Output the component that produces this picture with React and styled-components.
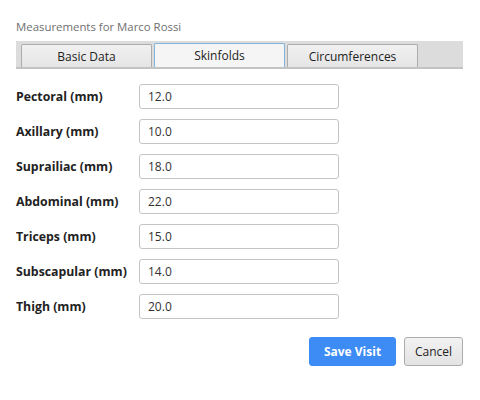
import React from 'react'
import styled, { createGlobalStyle } from 'styled-components'

const GlobalStyle = createGlobalStyle`
    body {
        margin: 0;
        background: #ffffff;
        font-family: "Open Sans", "Noto Sans", sans-serif;
    }
`

const Page = styled.div`
    width: 480px;
    height: 400px;
    box-sizing: border-box;
    padding: 19px 17px 0 16px;
    display: flex;
    flex-direction: column;
`

const Title = styled.div`
    font-size: 11.4px;
    color: #6f6f6f;
    height: 20px;
    line-height: 16px;
    margin-bottom: 2px;
`

const TabBar = styled.div`
    display: flex;
    align-items: flex-end;
    gap: 2px;
    height: 28px;
    box-sizing: border-box;
    padding: 0 0 0 5px;
    background: #dcdcdc;
    border-bottom: 2px solid #c3c3c3;
    margin-bottom: 15px;
`

const Tab = styled.div`
    width: 131px;
    height: ${p => (p.active ? '24px' : '23px')};
    box-sizing: border-box;
    display: flex;
    align-items: center;
    justify-content: center;
    font-size: 12px;
    color: #222;
    border: 1px solid ${p => (p.active ? '#7fb3e0' : '#acacac')};
    border-bottom: none;
    border-radius: 2px 2px 0 0;
    background: ${p => (p.active ? '#f5f5f5' : 'linear-gradient(#f0f0f0, #e5e5e5)')};
`

const Form = styled.div`
    display: flex;
    flex-direction: column;
    gap: 10px;
`

const Row = styled.div`
    display: flex;
    align-items: center;
    height: 25px;
`

const Label = styled.label`
    width: 123px;
    font-size: 12.3px;
    font-weight: 700;
    color: #222;
`

const Input = styled.input`
    width: 200px;
    height: 25px;
    box-sizing: border-box;
    border: 1px solid #c4c4c4;
    border-radius: 3px;
    padding: 0 8px;
    font-family: inherit;
    font-size: 12px;
    color: #333;
    outline: none;
`

const Actions = styled.div`
    display: flex;
    justify-content: flex-end;
    gap: 8px;
    margin-top: 18px;
`

const Button = styled.button`
    height: 29px;
    box-sizing: border-box;
    font-family: inherit;
    font-size: 12px;
    border-radius: 3px;
    cursor: pointer;
    padding: 0;
    width: ${p => (p.primary ? '87px' : '59px')};
    font-weight: ${p => (p.primary ? 700 : 400)};
    color: ${p => (p.primary ? '#ffffff' : '#222')};
    background: ${p => (p.primary ? '#3d8bf5' : 'linear-gradient(#f2f2f2, #e3e3e3)')};
    border: 1px solid ${p => (p.primary ? '#3d8bf5' : '#acacac')};
`

const fields = [
    ['Pectoral (mm)', '12.0'],
    ['Axillary (mm)', '10.0'],
    ['Suprailiac (mm)', '18.0'],
    ['Abdominal (mm)', '22.0'],
    ['Triceps (mm)', '15.0'],
    ['Subscapular (mm)', '14.0'],
    ['Thigh (mm)', '20.0'],
]

export default function App() {
    return (
        <Page>
            <GlobalStyle />
            <Title>Measurements for Marco Rossi</Title>
            <TabBar>
                <Tab>Basic Data</Tab>
                <Tab active>Skinfolds</Tab>
                <Tab>Circumferences</Tab>
            </TabBar>
            <Form>
                {fields.map(([label, value]) => (
                    <Row key={label}>
                        <Label>{label}</Label>
                        <Input defaultValue={value} />
                    </Row>
                ))}
            </Form>
            <Actions>
                <Button primary>Save Visit</Button>
                <Button>Cancel</Button>
            </Actions>
        </Page>
    )
}
